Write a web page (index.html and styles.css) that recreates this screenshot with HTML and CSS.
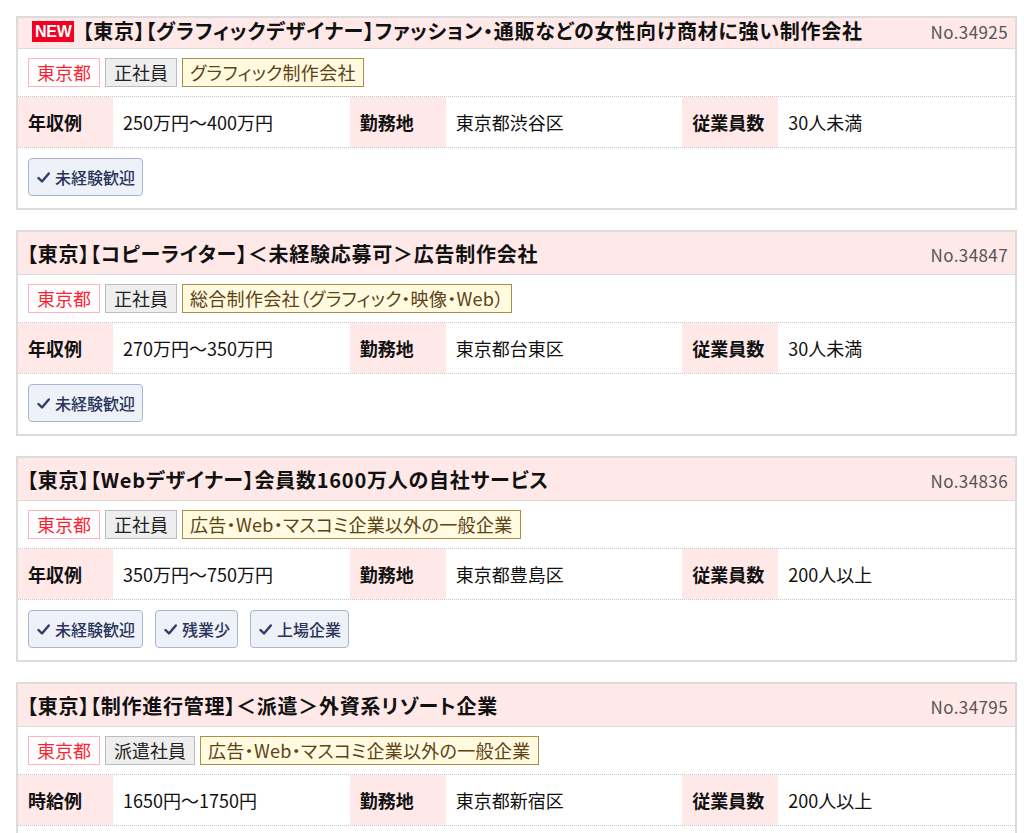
FILE: index.html
```html
<!DOCTYPE html>
<html lang="ja">
<head>
<meta charset="utf-8">
<title>求人一覧</title>
<link rel="stylesheet" href="styles.css">
</head>
<body>
<div class="list">

  <article class="card card--first">
    <header class="card-head">
      <h2 class="title"><span class="new">NEW</span>【東京】【グラフィックデザイナー】ファッション・通販などの女性向け商材に強い制作会社</h2>
      <span class="no">No.34925</span>
    </header>
    <div class="tags">
      <span class="tag tag--area">東京都</span>
      <span class="tag tag--type">正社員</span>
      <span class="tag tag--cat">グラフィック制作会社</span>
    </div>
    <dl class="info">
      <dt>年収例</dt><dd>250万円〜400万円</dd>
      <dt>勤務地</dt><dd>東京都渋谷区</dd>
      <dt>従業員数</dt><dd>30人未満</dd>
    </dl>
    <div class="feats">
      <span class="feat"><svg class="chk" viewBox="0 0 13 11"><path d="M1.5 6 L5 9.5 L11.8 1.5"/></svg>未経験歓迎</span>
    </div>
  </article>

  <article class="card">
    <header class="card-head">
      <h2 class="title">【東京】【コピーライター】＜未経験応募可＞広告制作会社</h2>
      <span class="no">No.34847</span>
    </header>
    <div class="tags">
      <span class="tag tag--area">東京都</span>
      <span class="tag tag--type">正社員</span>
      <span class="tag tag--cat">総合制作会社（グラフィック・映像・Web）</span>
    </div>
    <dl class="info">
      <dt>年収例</dt><dd>270万円〜350万円</dd>
      <dt>勤務地</dt><dd>東京都台東区</dd>
      <dt>従業員数</dt><dd>30人未満</dd>
    </dl>
    <div class="feats">
      <span class="feat"><svg class="chk" viewBox="0 0 13 11"><path d="M1.5 6 L5 9.5 L11.8 1.5"/></svg>未経験歓迎</span>
    </div>
  </article>

  <article class="card">
    <header class="card-head">
      <h2 class="title">【東京】【Webデザイナー】会員数1600万人の自社サービス</h2>
      <span class="no">No.34836</span>
    </header>
    <div class="tags">
      <span class="tag tag--area">東京都</span>
      <span class="tag tag--type">正社員</span>
      <span class="tag tag--cat">広告・Web・マスコミ企業以外の一般企業</span>
    </div>
    <dl class="info">
      <dt>年収例</dt><dd>350万円〜750万円</dd>
      <dt>勤務地</dt><dd>東京都豊島区</dd>
      <dt>従業員数</dt><dd>200人以上</dd>
    </dl>
    <div class="feats">
      <span class="feat"><svg class="chk" viewBox="0 0 13 11"><path d="M1.5 6 L5 9.5 L11.8 1.5"/></svg>未経験歓迎</span>
      <span class="feat"><svg class="chk" viewBox="0 0 13 11"><path d="M1.5 6 L5 9.5 L11.8 1.5"/></svg>残業少</span>
      <span class="feat"><svg class="chk" viewBox="0 0 13 11"><path d="M1.5 6 L5 9.5 L11.8 1.5"/></svg>上場企業</span>
    </div>
  </article>

  <article class="card">
    <header class="card-head">
      <h2 class="title">【東京】【制作進行管理】＜派遣＞外資系リゾート企業</h2>
      <span class="no">No.34795</span>
    </header>
    <div class="tags">
      <span class="tag tag--area">東京都</span>
      <span class="tag tag--type">派遣社員</span>
      <span class="tag tag--cat">広告・Web・マスコミ企業以外の一般企業</span>
    </div>
    <dl class="info">
      <dt>時給例</dt><dd>1650円〜1750円</dd>
      <dt>勤務地</dt><dd>東京都新宿区</dd>
      <dt>従業員数</dt><dd>200人以上</dd>
    </dl>
    <div class="feats">
      <span class="feat"><svg class="chk" viewBox="0 0 13 11"><path d="M1.5 6 L5 9.5 L11.8 1.5"/></svg>未経験歓迎</span>
    </div>
  </article>

</div>
</body>
</html>
```
FILE: styles.css
```css
html, body {
  margin: 0;
  padding: 0;
  background: #fff;
}
body {
  font-family: "Noto Sans CJK JP", "Noto Sans", sans-serif;
  color: #111;
}
.list {
  display: flex;
  flex-direction: column;
  gap: 20px;
  width: 1001px;
  margin: 16px 0 0 16px;
}
.card {
  border: 2px solid #dcdcdc;
  background: #fff;
}
.card-head {
  display: flex;
  align-items: center;
  justify-content: space-between;
  height: 43px;
  box-sizing: border-box;
  padding: 2px 7px 0 9px;
  background: #ffe8e8;
  border-bottom: 1px solid #dcdcdc;
}
.card--first .card-head {
  height: 31px;
  padding-top: 0;
  padding-bottom: 4px;
}
.title {
  margin: 0;
  font-size: 20px;
  font-weight: 700;
  line-height: 1.3;
  letter-spacing: 0.75px;
  font-feature-settings: "palt";
  color: #111;
  display: flex;
  align-items: center;
  white-space: nowrap;
}
.new {
  display: inline-block;
  margin-left: 5px;
  margin-right: 8px;
  padding: 0 3px;
  height: 21px;
  line-height: 22px;
  background: #f20021;
  color: #fff;
  font-family: "Liberation Sans", Arial, sans-serif;
  font-size: 16px;
  font-weight: 700;
  letter-spacing: -0.3px;
}
.no {
  font-size: 17px;
  letter-spacing: 0.4px;
  color: #555;
}
.tags {
  display: flex;
  gap: 5px;
  padding: 9px 10px;
}
.tag {
  display: inline-block;
  height: 29px;
  box-sizing: border-box;
  line-height: 27px;
  padding: 0 8px;
  font-size: 18px;
  border: 1px solid;
}
.tag--area {
  color: #ff1f33;
  border-color: #ffb3bd;
  background: #fff;
}
.tag--type {
  color: #222;
  border-color: #bdbdbd;
  background: #eeeeee;
}
.tag--cat {
  color: #5c4214;
  border-color: #a88f45;
  background: #fffae0;
  font-feature-settings: "palt";
  letter-spacing: 0.3px;
  padding: 0 7px;
}
.info {
  display: grid;
  grid-template-columns: 95px 1fr 96px 1fr 96px 1fr;
  height: 50px;
  margin: 0;
  border-top: 1px dotted #c8c8c8;
  border-bottom: 1px dotted #c8c8c8;
}
.info dt, .info dd {
  margin: 0;
  display: flex;
  align-items: center;
  padding-left: 10px;
  font-size: 18px;
}
.info dt {
  background: #ffe8e8;
  font-weight: 700;
}
.feats {
  display: flex;
  gap: 12px;
  padding: 10px 10px 12px;
}
.feat {
  display: inline-flex;
  align-items: center;
  gap: 5px;
  height: 38px;
  box-sizing: border-box;
  padding: 0 7px 0 8px;
  border: 1px solid #a9b4cf;
  border-radius: 4px;
  background: #eef1f8;
  color: #28345a;
  font-size: 16px;
  font-weight: 500;
}
.chk {
  width: 13px;
  height: 11px;
  fill: none;
  stroke: #2e3c66;
  stroke-width: 2.4;
  stroke-linecap: round;
  stroke-linejoin: round;
}
```
